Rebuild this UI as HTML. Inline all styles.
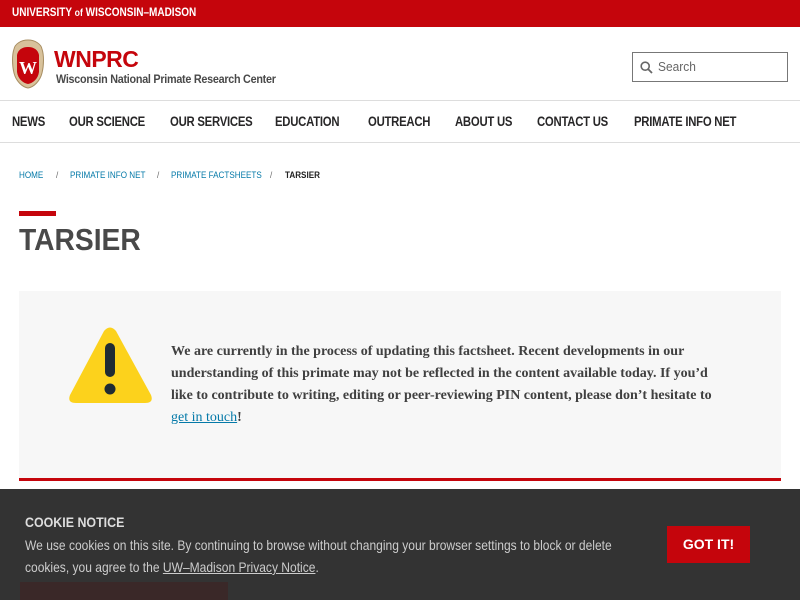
<!DOCTYPE html>
<html><head><meta charset="utf-8"><style>
*{margin:0;padding:0;box-sizing:border-box}
body{width:800px;height:600px;overflow:hidden;position:relative;background:#fff;font-family:"Liberation Sans",sans-serif;color:#333}
.a{position:absolute;white-space:nowrap;transform-origin:0 0}
.top{position:absolute;left:0;top:0;width:800px;height:27px;background:#c5050c}
.nav{font-weight:bold;font-size:13.5px;color:#282728;top:114px;letter-spacing:-0.3px;transform:scaleX(0.84)}
.bc{font-size:9px;top:170px;color:#0479a8;transform:scaleX(0.9)}
</style></head><body>
<div class="top"></div>
<div class="a" style="left:12px;top:7px;color:#fff;font-size:11.5px;font-weight:bold;transform:scaleX(0.87)">UNIVERSITY <span style="font-size:10px">of</span> WISCONSIN–MADISON</div>
<svg class="a" style="left:11px;top:39px" width="34" height="50" viewBox="0 0 34 50">
<path d="M17 1 C24 1 30 5 31 10 C33 16 33 26 31 34 C29 42 23 48 17 49 C11 48 5 42 3 34 C1 26 1 16 3 10 C4 5 10 1 17 1Z" fill="#d8c29b" stroke="#a88e62"/>
<path d="M17 8 C23 8 27 11 28 16 L28 33 C27 40 22 44 17 45 C12 44 7 40 6 33 L6 16 C7 11 11 8 17 8Z" fill="#c5050c"/>
<text x="17" y="35" text-anchor="middle" fill="#fff" font-size="18" font-weight="bold" font-family="Liberation Serif">W</text>
</svg>
<div class="a" style="left:54px;top:46px;color:#c5050c;font-size:23px;font-weight:bold;letter-spacing:-0.5px">WNPRC</div>
<div class="a" style="left:56px;top:72px;color:#494949;font-size:12px;font-weight:bold;letter-spacing:-0.3px;transform:scaleX(0.9)">Wisconsin National Primate Research Center</div>
<div class="a" style="left:632px;top:52px;width:156px;height:30px;border:1px solid #777"></div>
<svg class="a" style="left:640px;top:61px" width="13" height="13" viewBox="0 0 13 13"><circle cx="5.2" cy="5.2" r="4" fill="none" stroke="#666" stroke-width="1.6"/><path d="M8 8 L12 12" stroke="#666" stroke-width="1.8"/></svg>
<div class="a" style="left:658px;top:59px;font-size:13px;color:#666;transform:scaleX(0.92)">Search</div>
<div class="a" style="left:0;top:100px;width:800px;height:1px;background:#ddd"></div>
<div class="a" style="left:0;top:142px;width:800px;height:1px;background:#ddd"></div>
<div class="a nav" style="left:12px">NEWS</div>
<div class="a nav" style="left:69px">OUR SCIENCE</div>
<div class="a nav" style="left:170px">OUR SERVICES</div>
<div class="a nav" style="left:275px">EDUCATION</div>
<div class="a nav" style="left:368px">OUTREACH</div>
<div class="a nav" style="left:455px">ABOUT US</div>
<div class="a nav" style="left:537px">CONTACT US</div>
<div class="a nav" style="left:634px">PRIMATE INFO NET</div>
<div class="a bc" style="left:19px">HOME</div>
<div class="a bc" style="left:56px;color:#666">/</div>
<div class="a bc" style="left:70px">PRIMATE INFO NET</div>
<div class="a bc" style="left:157px;color:#666">/</div>
<div class="a bc" style="left:171px">PRIMATE FACTSHEETS</div>
<div class="a bc" style="left:270px;color:#666">/</div>
<div class="a bc" style="left:285px;color:#222;font-weight:bold">TARSIER</div>
<div class="a" style="left:19px;top:211px;width:37px;height:5px;background:#c5050c"></div>
<div class="a" style="left:19px;top:222px;font-size:31px;font-weight:bold;color:#494949;transform:scaleX(0.91)">TARSIER</div>
<div class="a" style="left:19px;top:291px;width:762px;height:190px;background:#f7f7f7;border-bottom:3px solid #c5050c"></div>
<svg class="a" style="left:68px;top:326px" width="85" height="80" viewBox="0 0 85 80">
<path d="M36 5 Q42 -2 48 5 L83 69 Q86 77 77 77 L8 77 Q-1 77 2 69Z" fill="#fcd21c"/>
<rect x="37" y="17" width="10" height="34" rx="5" fill="#1f2b33"/>
<circle cx="42" cy="63" r="5.5" fill="#1f2b33"/>
</svg>
<div class="a" style="left:171px;top:341px;font-family:'Liberation Serif',serif;font-weight:bold;font-size:14px;line-height:22px;color:#404040;white-space:normal;width:555px">We are currently in the process of updating this factsheet. Recent developments in our understanding of this primate may not be reflected in the content available today. If you’d like to contribute to writing, editing or peer-reviewing PIN content, please don’t hesitate to <span style="color:#0479a8;text-decoration:underline;font-weight:normal">get in touch</span>!</div>
<div class="a" style="left:0;top:489px;width:800px;height:111px;background:#333"></div>
<div class="a" style="left:20px;top:582px;width:208px;height:18px;background:#3a2828"></div>
<div class="a" style="left:25px;top:515px;color:#ddd;font-size:13.5px;font-weight:bold;transform:scaleX(0.92)">COOKIE NOTICE</div>
<div class="a" style="left:25px;top:534px;color:#ccc;font-size:14px;line-height:22px;white-space:normal;width:690px;transform:scaleX(0.86)">We use cookies on this site. By continuing to browse without changing your browser settings to block or delete cookies, you agree to the <span style="text-decoration:underline">UW–Madison Privacy Notice</span>.</div>
<div class="a" style="left:667px;top:526px;width:83px;height:37px;background:#c5050c;color:#fff;font-weight:bold;font-size:14px;text-align:center;line-height:37px">GOT IT!</div>
</body></html>
